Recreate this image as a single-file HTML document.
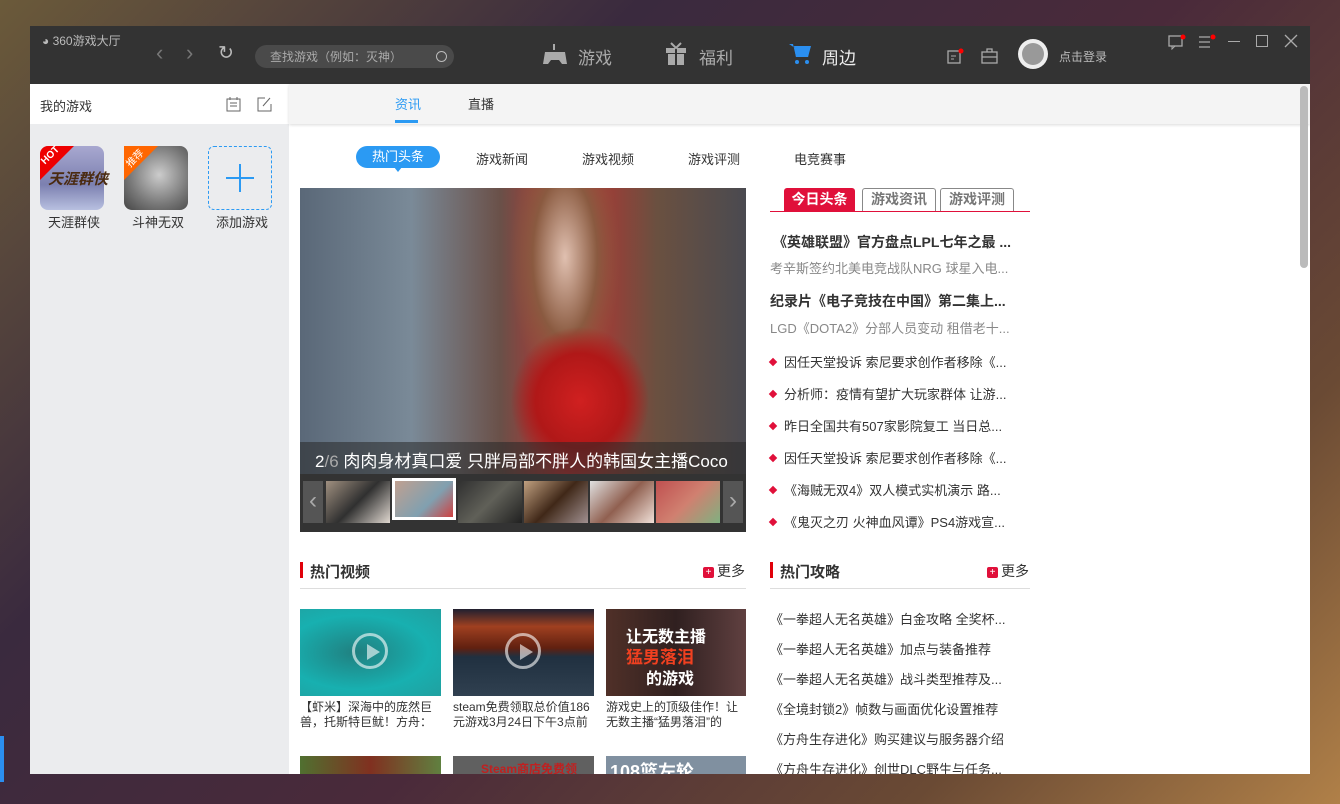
<!DOCTYPE html>
<html><head><meta charset="utf-8">
<style>
*{margin:0;padding:0;box-sizing:border-box}
body{width:1340px;height:804px;overflow:hidden;position:relative;font-family:"Liberation Sans","Noto Sans CJK SC",sans-serif;
background:linear-gradient(135deg,#6b5a3a 0%,#3a2a3e 30%,#4a2a3a 55%,#6a4a34 80%,#b08048 100%)}
.a{position:absolute}
.win{left:30px;top:26px;width:1280px;height:748px;background:#fff;overflow:hidden}
.top{left:0;top:0;width:1280px;height:58px;background:#333}
.t{color:#ccc;font-size:13px;white-space:nowrap}
.side{left:0;top:58px;width:259px;height:690px;background:#ebecee}
.sh{left:0;top:0;width:259px;height:40px;background:#fff}
.tabbar{left:259px;top:58px;width:1021px;height:40px;background:#f4f4f4;box-shadow:0 1px 3px rgba(0,0,0,.15)}
.li{font-size:13px;color:#333;white-space:nowrap}
.dia{display:inline-block;width:6px;height:6px;background:#e0103a;transform:rotate(45deg);margin-right:8px;vertical-align:2px}
.hd{font-size:15px;font-weight:bold;color:#333}
.bar{width:3px;height:16px;background:#e0000a}
.more{font-size:14px;color:#333}
.more i{display:inline-block;width:11px;height:11px;background:#e0103a;border-radius:2px;color:#fff;font-size:10px;line-height:11px;text-align:center;font-style:normal;margin-right:3px;vertical-align:1px}
.cap{font-size:12px;color:#333;line-height:15px}
.play{width:36px;height:36px;border:3px solid rgba(255,255,255,.6);border-radius:50%}
.play:after{content:"";position:absolute;left:12px;top:8px;border-left:13px solid rgba(255,255,255,.6);border-top:8px solid transparent;border-bottom:8px solid transparent}
</style></head><body>
<div class="a win">
 <div class="a top">
  <div class="a t" style="left:12px;top:6px;font-size:12px;color:#bbb">&#9685; 360游戏大厅</div>
  <div class="a t" style="left:126px;top:14px;font-size:22px;color:#777">&#8249;</div>
  <div class="a t" style="left:156px;top:14px;font-size:22px;color:#777">&#8250;</div>
  <div class="a t" style="left:188px;top:16px;font-size:19px;color:#bbb">&#8635;</div>
  <div class="a" style="left:225px;top:19px;width:199px;height:23px;border-radius:12px;background:#4a4a4a"></div>
  <div class="a t" style="left:240px;top:22px;font-size:12px;color:#aaa">查找游戏（例如：灭神）</div>
  <div class="a" style="left:406px;top:25px;width:11px;height:11px;border:1.5px solid #bbb;border-radius:50%"></div>
  <svg class="a" style="left:512px;top:16px" width="26" height="24"><path d="M12 2v6" stroke="#aaa" stroke-width="2"/><path d="M3 10h20l2 12h-5l-3-4h-8l-3 4H1z" fill="#aaa"/></svg>
  <div class="a t" style="left:548px;top:18px;font-size:17px;color:#aaa">游戏</div>
  <svg class="a" style="left:634px;top:16px" width="24" height="24"><rect x="2" y="6" width="20" height="5" fill="#aaa"/><rect x="4" y="12" width="16" height="11" fill="#aaa"/><path d="M12 6v17" stroke="#333" stroke-width="2"/><path d="M7 1l5 5 5-5" stroke="#aaa" stroke-width="2" fill="none"/></svg>
  <div class="a t" style="left:669px;top:18px;font-size:17px;color:#aaa">福利</div>
  <svg class="a" style="left:758px;top:16px" width="24" height="24"><path d="M1 2h4l3 13h12l2-9H7" fill="#2b8ff0"/><path d="M6 4h17l-3 11H8z" fill="#2b8ff0"/><circle cx="9" cy="20" r="2" fill="#2b8ff0"/><circle cx="19" cy="20" r="2" fill="#2b8ff0"/></svg>
  <div class="a t" style="left:792px;top:18px;font-size:17px;color:#eee">周边</div>
  <svg class="a" style="left:917px;top:22px" width="18" height="16"><rect x="1" y="3" width="12" height="12" fill="none" stroke="#aaa" stroke-width="1.3"/><path d="M4 8h5M4 11h3" stroke="#aaa"/><circle cx="14" cy="3" r="2.5" fill="#f00"/></svg>
  <svg class="a" style="left:951px;top:22px" width="18" height="16"><rect x="1" y="4" width="15" height="11" fill="none" stroke="#aaa" stroke-width="1.3"/><path d="M6 4V1h5v3M1 9h15" stroke="#aaa" stroke-width="1.3" fill="none"/></svg>
  <div class="a" style="left:988px;top:13px;width:30px;height:30px;border-radius:50%;background:#eee"></div>
  <div class="a" style="left:992px;top:17px;width:22px;height:22px;border-radius:50%;background:#999"></div>
  <div class="a t" style="left:1029px;top:22px;font-size:12px;color:#bbb">点击登录</div>
  <svg class="a" style="left:1138px;top:8px" width="18" height="16"><rect x="1" y="2" width="13" height="10" fill="none" stroke="#aaa" stroke-width="1.3"/><path d="M4 12v3l3-3" stroke="#aaa" fill="none"/><circle cx="15" cy="3" r="2.5" fill="#f00"/></svg>
  <svg class="a" style="left:1168px;top:8px" width="18" height="16"><path d="M1 3h11M1 8h11M1 13h11" stroke="#aaa" stroke-width="1.3"/><circle cx="15" cy="3" r="2.5" fill="#f00"/></svg>
  <div class="a" style="left:1198px;top:15px;width:12px;height:1px;background:#aaa"></div>
  <div class="a" style="left:1226px;top:9px;width:12px;height:12px;border:1.3px solid #aaa"></div>
  <svg class="a" style="left:1254px;top:8px" width="14" height="14"><path d="M1 1l12 12M13 1L1 13" stroke="#aaa" stroke-width="1.3"/></svg>
 </div>
 <div class="a side">
  <div class="a sh"><div class="a" style="left:10px;top:12px;font-size:13px;color:#333">我的游戏</div>
   <svg class="a" style="left:196px;top:13px" width="16" height="15"><rect x="1" y="2" width="13" height="12" fill="none" stroke="#666"/><path d="M4 6h7M4 9h7M4 0v3M11 0v3" stroke="#666"/></svg>
   <svg class="a" style="left:227px;top:13px" width="15" height="15"><path d="M8 1H1v13h13V7M6 9l7-8" stroke="#666" fill="none"/></svg></div>
  <div class="a" style="left:10px;top:62px;width:64px;height:64px;border-radius:8px;background:linear-gradient(180deg,#a8a8d0,#7c80b0 60%,#b8c0e0)"></div>
  <div class="a" style="left:10px;top:62px;width:0;height:0;border-top:34px solid #e00;border-right:34px solid transparent;border-top-left-radius:8px"></div>
  <div class="a" style="left:10px;top:66px;font-size:10px;color:#fff;font-weight:bold;transform:rotate(-45deg)">HOT</div>
  <div class="a" style="left:18px;top:84px;font-size:15px;color:#4a2a10;font-weight:bold;font-style:italic">天涯群侠</div>
  <div class="a" style="left:94px;top:62px;width:64px;height:64px;border-radius:8px;background:radial-gradient(circle at 55% 45%,#ccc,#777 60%,#444)"></div>
  <div class="a" style="left:94px;top:62px;width:0;height:0;border-top:34px solid #f60;border-right:34px solid transparent"></div>
  <div class="a" style="left:94px;top:66px;font-size:10px;color:#fff;transform:rotate(-45deg)">推荐</div>
  <div class="a" style="left:178px;top:62px;width:64px;height:64px;border:1.3px dashed #2b9af3;border-radius:6px"></div>
  <div class="a" style="left:209px;top:80px;width:2px;height:28px;background:#2b9af3"></div>
  <div class="a" style="left:196px;top:93px;width:28px;height:2px;background:#2b9af3"></div>
  <div class="a li" style="left:18px;top:128px">天涯群侠</div>
  <div class="a li" style="left:102px;top:128px">斗神无双</div>
  <div class="a li" style="left:186px;top:128px">添加游戏</div>
 </div>
 <div class="a tabbar">
  <div class="a" style="left:106px;top:10px;font-size:13px;color:#2b9af3">资讯</div>
  <div class="a" style="left:106px;top:36px;width:23px;height:3px;background:#2b9af3"></div>
  <div class="a" style="left:179px;top:10px;font-size:13px;color:#333">直播</div>
 </div>
 <div class="a" style="left:1270px;top:60px;width:8px;height:182px;border-radius:4px;background:#bbb"></div>
 <div class="a" style="left:326px;top:120px;width:84px;height:22px;border-radius:11px;background:#2b9af3;color:#fff;font-size:13px;text-align:center;line-height:22px">热门头条</div>
 <div class="a" style="left:364px;top:141px;border-top:5px solid #2b9af3;border-left:4px solid transparent;border-right:4px solid transparent"></div>
 <div class="a li" style="left:446px;top:123px">游戏新闻</div>
 <div class="a li" style="left:552px;top:123px">游戏视频</div>
 <div class="a li" style="left:658px;top:123px">游戏评测</div>
 <div class="a li" style="left:764px;top:123px">电竞赛事</div>
 <div class="a" style="left:270px;top:162px;width:446px;height:286px;background:linear-gradient(90deg,#5a6878 0%,#7a8a98 25%,#6a5048 45%,#c03030 60%,#6a5040 80%,#4a4a50 100%)"></div>
 <div class="a" style="left:470px;top:162px;width:130px;height:230px;background:radial-gradient(ellipse at 50% 30%,#e0c0b0 0,#8a5a40 35%,transparent 60%)"></div>
 <div class="a" style="left:480px;top:300px;width:140px;height:150px;background:radial-gradient(ellipse at 50% 50%,#d02020 0,#b01818 45%,transparent 70%)"></div>
 <div class="a" style="left:270px;top:416px;width:446px;height:32px;background:rgba(40,40,40,.55)"></div>
 <div class="a" style="left:285px;top:421px;font-size:17px;color:#fff;white-space:nowrap">2<span style="color:#aaa">/6</span> 肉肉身材真口爱 只胖局部不胖人的韩国女主播Coco</div>
 <div class="a" style="left:270px;top:448px;width:446px;height:58px;background:#333"></div>
 <div class="a" style="left:273px;top:455px;width:20px;height:42px;background:#555;color:#aaa;font-size:24px;text-align:center;line-height:40px">&#8249;</div>
 <div class="a" style="left:693px;top:455px;width:20px;height:42px;background:#555;color:#aaa;font-size:24px;text-align:center;line-height:40px">&#8250;</div>
 <div class="a" style="left:296px;top:455px;width:64px;height:42px;background:linear-gradient(135deg,#a09080,#303030 50%,#e0d8d0)"></div>
 <div class="a" style="left:362px;top:452px;width:64px;height:42px;border:3px solid #fff;background:linear-gradient(135deg,#c0a090,#80a0b0 60%,#d04040)"></div>
 <div class="a" style="left:428px;top:455px;width:64px;height:42px;background:linear-gradient(135deg,#303030,#606058,#202020)"></div>
 <div class="a" style="left:494px;top:455px;width:64px;height:42px;background:linear-gradient(135deg,#c0a080,#402818 50%,#a09090)"></div>
 <div class="a" style="left:560px;top:455px;width:64px;height:42px;background:linear-gradient(135deg,#e0e0e0,#906050 50%,#f0e0d8)"></div>
 <div class="a" style="left:626px;top:455px;width:64px;height:42px;background:linear-gradient(135deg,#c05050,#d08070 50%,#80b080)"></div>
 <div class="a" style="left:754px;top:162px;width:71px;height:23px;background:#e0103a;color:#fff;font-size:14px;font-weight:bold;text-align:center;line-height:23px;border-radius:3px 3px 0 0">今日头条</div>
 <div class="a" style="left:832px;top:162px;width:74px;height:23px;border:1px solid #888;border-bottom:none;color:#777;font-size:14px;font-weight:bold;text-align:center;line-height:21px;border-radius:3px 3px 0 0">游戏资讯</div>
 <div class="a" style="left:910px;top:162px;width:74px;height:23px;border:1px solid #888;border-bottom:none;color:#777;font-size:14px;font-weight:bold;text-align:center;line-height:21px;border-radius:3px 3px 0 0">游戏评测</div>
 <div class="a" style="left:740px;top:185px;width:260px;height:1px;background:#e0103a"></div>
 <div class="a li" style="left:743px;top:206px;font-size:14px;font-weight:bold">《英雄联盟》官方盘点LPL七年之最 ...</div>
 <div class="a li" style="left:740px;top:232px;color:#888">考辛斯签约北美电竞战队NRG 球星入电...</div>
 <div class="a li" style="left:740px;top:265px;font-size:14px;font-weight:bold">纪录片《电子竞技在中国》第二集上...</div>
 <div class="a li" style="left:740px;top:292px;color:#888">LGD《DOTA2》分部人员变动 租借老十...</div>
 <div class="a li" style="left:740px;top:326px"><span class="dia"></span>因任天堂投诉 索尼要求创作者移除《...</div>
 <div class="a li" style="left:740px;top:358px"><span class="dia"></span>分析师：疫情有望扩大玩家群体 让游...</div>
 <div class="a li" style="left:740px;top:390px"><span class="dia"></span>昨日全国共有507家影院复工 当日总...</div>
 <div class="a li" style="left:740px;top:422px"><span class="dia"></span>因任天堂投诉 索尼要求创作者移除《...</div>
 <div class="a li" style="left:740px;top:454px"><span class="dia"></span>《海贼无双4》双人模式实机演示 路...</div>
 <div class="a li" style="left:740px;top:486px"><span class="dia"></span>《鬼灭之刃 火神血风谭》PS4游戏宣...</div>
 <div class="a bar" style="left:270px;top:536px"></div>
 <div class="a hd" style="left:280px;top:535px">热门视频</div>
 <div class="a more" style="left:673px;top:535px"><i>+</i>更多</div>
 <div class="a" style="left:270px;top:562px;width:446px;height:1px;background:#ddd"></div>
 <div class="a bar" style="left:740px;top:536px"></div>
 <div class="a hd" style="left:750px;top:535px">热门攻略</div>
 <div class="a more" style="left:957px;top:535px"><i>+</i>更多</div>
 <div class="a" style="left:740px;top:562px;width:260px;height:1px;background:#ddd"></div>
 <div class="a" style="left:270px;top:583px;width:141px;height:87px;background:radial-gradient(ellipse at 40% 50%,#208080,#18b0b0 60%,#20a0a0)"><div class="a play" style="left:52px;top:24px"></div></div>
 <div class="a" style="left:423px;top:583px;width:141px;height:87px;background:linear-gradient(180deg,#202030 0,#a04020 20%,#602010 45%,#203040 55%,#304050 100%)"><div class="a play" style="left:52px;top:24px"></div></div>
 <div class="a" style="left:576px;top:583px;width:140px;height:87px;background:linear-gradient(90deg,#503028,#302020 50%,#604040)"><div class="a" style="left:20px;top:14px;font-size:16px;font-weight:bold;color:#fff;white-space:nowrap">让无数主播</div><div class="a" style="left:20px;top:34px;font-size:17px;font-weight:bold;color:#f04020;white-space:nowrap">猛男落泪</div><div class="a" style="left:40px;top:56px;font-size:16px;font-weight:bold;color:#fff;white-space:nowrap">的游戏</div></div>
 <div class="a cap" style="left:270px;top:674px;width:141px">【虾米】深海中的庞然巨兽，托斯特巨鱿！方舟：</div>
 <div class="a cap" style="left:423px;top:674px;width:145px;height:30px;overflow:hidden">steam免费领取总价值186元游戏3月24日下午3点前</div>
 <div class="a cap" style="left:576px;top:674px;width:140px">游戏史上的顶级佳作！让无数主播“猛男落泪”的</div>
 <div class="a" style="left:270px;top:730px;width:141px;height:30px;background:linear-gradient(90deg,#507030,#803020 50%,#608040)"></div>
 <div class="a" style="left:423px;top:730px;width:141px;height:30px;background:#606060"><div class="a" style="left:28px;top:4px;font-size:12px;font-weight:bold;color:#c02020;white-space:nowrap">Steam商店免费领</div></div>
 <div class="a" style="left:576px;top:730px;width:140px;height:30px;background:#8090a0"><div class="a" style="left:4px;top:2px;font-size:18px;font-weight:bold;color:#fff;white-space:nowrap">108篮左轮</div></div>
 <div class="a li" style="left:740px;top:583px">《一拳超人无名英雄》白金攻略 全奖杯...</div>
 <div class="a li" style="left:740px;top:613px">《一拳超人无名英雄》加点与装备推荐</div>
 <div class="a li" style="left:740px;top:643px">《一拳超人无名英雄》战斗类型推荐及...</div>
 <div class="a li" style="left:740px;top:673px">《全境封锁2》帧数与画面优化设置推荐</div>
 <div class="a li" style="left:740px;top:703px">《方舟生存进化》购买建议与服务器介绍</div>
 <div class="a li" style="left:740px;top:733px">《方舟生存进化》创世DLC野生与任务...</div>
</div>
<div class="a" style="left:0;top:736px;width:4px;height:46px;background:#2b8ff0"></div>
</body></html>
